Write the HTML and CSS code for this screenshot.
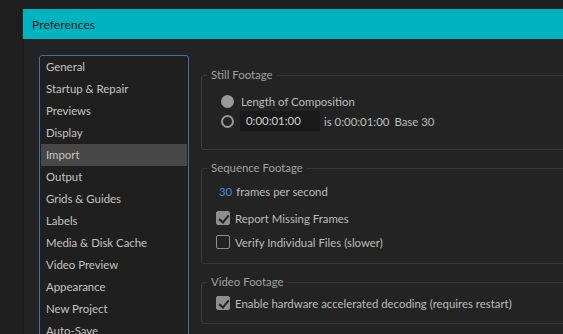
FILE: index.html
```html
<!DOCTYPE html>
<html lang="en">
<head>
    <meta charset="UTF-8">
    <title>Preferences</title>
    <link rel="stylesheet" href="styles.css">
</head>
<body>
    <div class="window">
        <div class="titlebar">Preferences</div>
        <div class="window-body">
            <ul class="nav-list">
                <li>General</li>
                <li>Startup &amp; Repair</li>
                <li>Previews</li>
                <li>Display</li>
                <li class="selected">Import</li>
                <li>Output</li>
                <li>Grids &amp; Guides</li>
                <li>Labels</li>
                <li>Media &amp; Disk Cache</li>
                <li>Video Preview</li>
                <li>Appearance</li>
                <li>New Project</li>
                <li>Auto-Save</li>
            </ul>

            <div class="panel">
                <fieldset class="group still">
                    <legend>Still Footage</legend>
                    <div class="row">
                        <span class="radio on"></span>
                        <span>Length of Composition</span>
                    </div>
                    <div class="row">
                        <span class="radio"></span>
                        <span class="field">0:00:01:00</span>
                        <span>is 0:00:01:00</span>
                        <span class="base">Base 30</span>
                    </div>
                </fieldset>

                <fieldset class="group sequence">
                    <legend>Sequence Footage</legend>
                    <div class="row rate"><span class="value">30</span> frames per second</div>
                    <div class="row check-row">
                        <span class="check on"></span>
                        <span>Report Missing Frames</span>
                    </div>
                    <div class="row check-row">
                        <span class="check"></span>
                        <span>Verify Individual Files (slower)</span>
                    </div>
                </fieldset>

                <fieldset class="group video">
                    <legend>Video Footage</legend>
                    <div class="row check-row">
                        <span class="check on"></span>
                        <span>Enable hardware accelerated decoding (requires restart)</span>
                    </div>
                </fieldset>
            </div>
        </div>
    </div>
</body>
</html>
```

FILE: styles.css
```css
:root {
    --desk-color: #1e1e1e;
    --window-color: #232323;
    --title-color: #00b3c0;
    --text-color: #bdbdbd;
    --muted-color: #a2a2a2;
    --line-color: #393939;
    --list-border: #3f6fa6;
    --accent-color: #3d8fe0;
}

* {
    margin: 0;
    padding: 0;
    box-sizing: border-box;
}

html, body {
    width: 563px;
    height: 334px;
    overflow: hidden;
}

body {
    background-color: var(--desk-color);
    font-family: Lato, 'Open Sans', sans-serif;
    font-size: 11.4px;
    color: var(--text-color);
    padding: 9px 0 0 23px;
}

.window {
    width: 700px;
    height: 400px;
    background-color: var(--window-color);
    border-left: 1px solid #1a1a1a;
}

.titlebar {
    height: 30px;
    background-color: var(--title-color);
    color: #1b1b1b;
    font-size: 12.2px;
    line-height: 31px;
    padding-left: 9px;
    margin-left: -1px;
}

.window-body {
    display: flex;
    align-items: flex-start;
    padding: 16px 0 0 15px;
}

.nav-list {
    list-style: none;
    width: 150px;
    height: 320px;
    border: 1px solid var(--list-border);
    border-radius: 3px;
    background-color: #1f1f1f;
    padding: 0 1px;
    flex-shrink: 0;
}

.nav-list li {
    height: 22px;
    line-height: 22px;
    padding-left: 5px;
    color: #c4c4c4;
}

.nav-list li.selected {
    background-color: #474747;
}

.panel {
    margin-left: 12px;
    width: 420px;
    margin-top: 12px;
}

.group {
    border: 1px solid var(--line-color);
    border-radius: 3px;
    padding: 0 0 0 20px;
    margin-bottom: 10px;
}

.group legend {
    color: var(--muted-color);
    line-height: 16px;
    padding: 0 4px;
    margin-left: -15px;
}

.row {
    display: flex;
    align-items: center;
    height: 20px;
    gap: 7px;
}

.still {
    padding-top: 8px;
    padding-bottom: 18px;
}

.sequence {
    padding-top: 5px;
    padding-bottom: 11px;
}

.video {
    padding-top: 3px;
    padding-bottom: 10px;
}

.radio {
    width: 13px;
    height: 13px;
    border-radius: 50%;
    border: 2px solid #999999;
    flex-shrink: 0;
    margin-left: -1px;
}

.radio.on {
    background-color: #999999;
}

.field {
    width: 80px;
    height: 20px;
    line-height: 20px;
    background-color: #191919;
    border-radius: 2px;
    padding-left: 6px;
    color: #d0d0d0;
    margin-left: -1px;
    margin-right: -3px;
}

.base {
    margin-left: -2px;
}

.rate {
    margin-left: -3px;
    gap: 0;
}

.rate .value {
    color: var(--accent-color);
    margin-right: 4px;
}

.check-row {
    margin-left: -6px;
    gap: 5px;
}

.sequence .check-row:nth-child(3) {
    margin-top: 7px;
}

.sequence .check-row:nth-child(4) {
    margin-top: 4px;
}

.check {
    width: 14px;
    height: 14px;
    border: 1.5px solid #8e8e8e;
    border-radius: 2px;
    position: relative;
    flex-shrink: 0;
}

.check.on {
    background-color: #8e8e8e;
}

.check.on::after {
    content: '';
    position: absolute;
    left: 3.5px;
    top: 0.5px;
    width: 4px;
    height: 8px;
    border: solid #232323;
    border-width: 0 2px 2px 0;
    transform: rotate(40deg);
}
```
